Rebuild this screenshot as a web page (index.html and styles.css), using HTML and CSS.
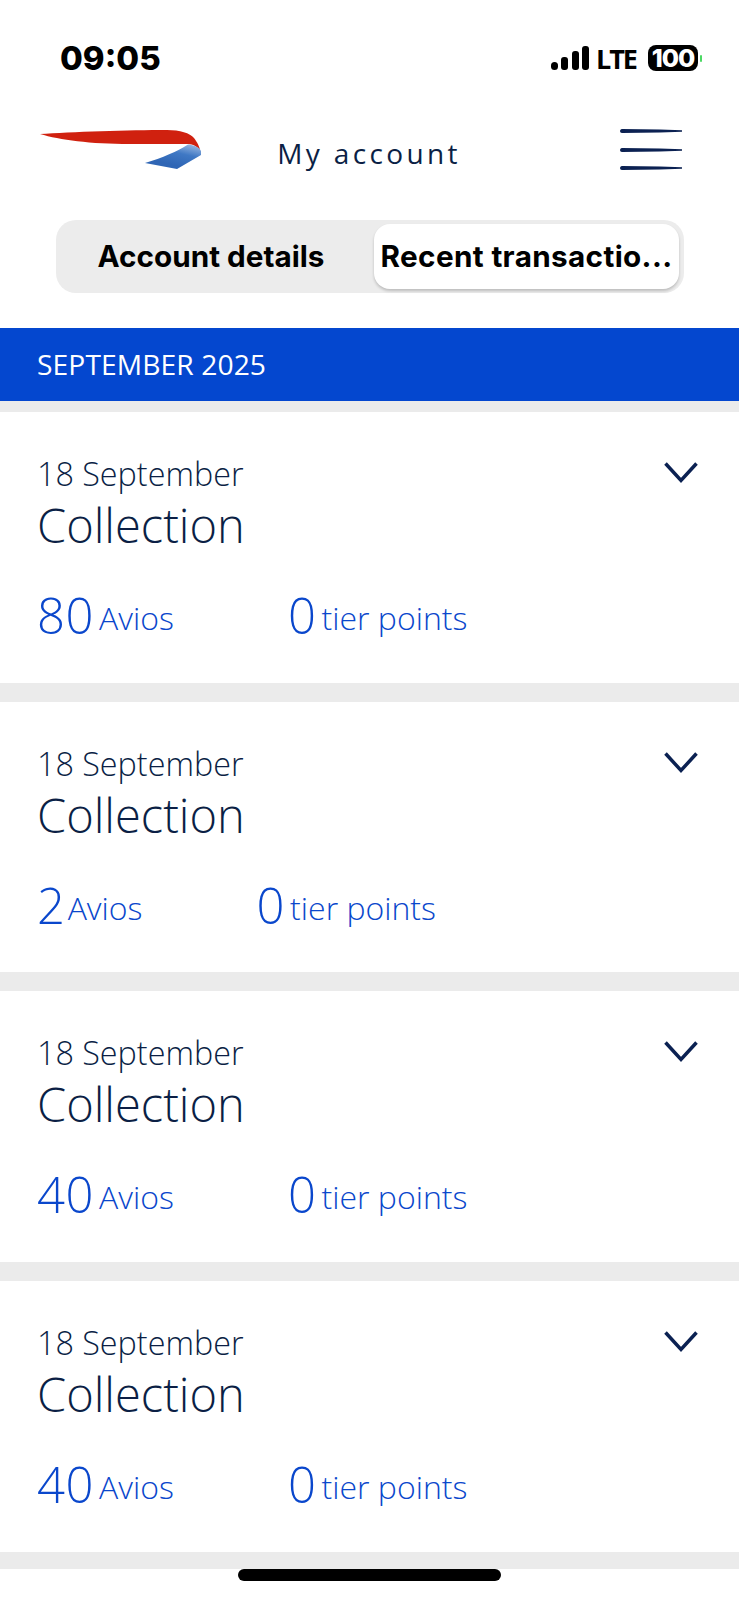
FILE: index.html
```html
<!DOCTYPE html>
<html>
<head>
    <meta charset="UTF-8">
    <title>My account</title>
    <link rel="stylesheet" href="styles.css">
</head>
<body>
    <!-- Status bar -->
    <div class="status-bar">
        <span class="status-time">09:05</span>
        <div class="status-icons">
            <svg class="signal" width="38" height="24" viewBox="0 0 38 24">
                <rect x="0" y="16" width="7" height="8" rx="3.5" fill="#000"/>
                <rect x="10" y="11" width="7" height="13" rx="3" fill="#000"/>
                <rect x="21" y="5" width="7" height="19" rx="3" fill="#000"/>
                <rect x="31" y="0" width="7" height="24" rx="3" fill="#000"/>
            </svg>
            <span class="status-lte">LTE</span>
            <span class="battery">100</span>
            <span class="battery-tip"></span>
        </div>
    </div>

    <header class="app-header">
        <svg class="logo" width="161" height="40" viewBox="0 0 161 40">
            <defs>
                <linearGradient id="wing" x1="0.85" y1="0.05" x2="0.45" y2="0.8">
                    <stop offset="0" stop-color="#8fb0de"/>
                    <stop offset="0.45" stop-color="#3f78c4"/>
                    <stop offset="1" stop-color="#2f66b5"/>
                </linearGradient>
            </defs>
            <path d="M0 4 C30 2 90 0 127 0 C140 0 150 3 154 8 C157 12 160 17 160 21 C157 16 153 14.5 148 14 L90 14 C50 14 20 10 0 4 Z" fill="#d0210f"/>
            <path d="M105 33 C122 28 138 21 148 14.5 C154 15 159 17 161 21 L161 25 L137 39 Z" fill="url(#wing)"/>
        </svg>
        <h1 class="page-title">My account</h1>
        <svg class="menu-icon" width="62" height="42" viewBox="0 0 62 42">
            <path d="M2 0 L40 0.6 L62 1.2 L62 2.8 L40 3.4 L2 4 C-0.6 4 -0.6 0 2 0 Z" fill="#0b2152"/>
            <path d="M2 19 L40 19.6 L62 20.2 L62 21.8 L40 22.4 L2 23 C-0.6 23 -0.6 19 2 19 Z" fill="#0b2152"/>
            <path d="M2 37 L40 37.6 L62 38.2 L62 39.8 L40 40.4 L2 41 C-0.6 41 -0.6 37 2 37 Z" fill="#0b2152"/>
        </svg>
    </header>

    <div class="segments">
        <div class="segment">Account details</div>
        <div class="segment segment-active">Recent transactio...</div>
    </div>

    <div class="month-bar">SEPTEMBER 2025</div>

    <div class="transactions">
        <div class="card">
            <div class="card-top">
                <div>
                    <div class="card-date">18 September</div>
                    <div class="card-title">Collection</div>
                </div>
                <svg class="chevron" width="34" height="22" viewBox="0 0 34 22"><path d="M1.5 1.5 L17 18.5 L32.5 1.5" fill="none" stroke="#0b2152" stroke-width="3.5"/></svg>
            </div>
            <div class="card-values">
                <div class="value"><span class="value-num">80</span> <span class="value-unit">Avios</span></div>
                <div class="value"><span class="value-num">0</span> <span class="value-unit">tier points</span></div>
            </div>
        </div>
        <div class="card">
            <div class="card-top">
                <div>
                    <div class="card-date">18 September</div>
                    <div class="card-title">Collection</div>
                </div>
                <svg class="chevron" width="34" height="22" viewBox="0 0 34 22"><path d="M1.5 1.5 L17 18.5 L32.5 1.5" fill="none" stroke="#0b2152" stroke-width="3.5"/></svg>
            </div>
            <div class="card-values">
                <div class="value"><span class="value-num value-num-tight">2</span> <span class="value-unit">Avios</span></div>
                <div class="value"><span class="value-num">0</span> <span class="value-unit">tier points</span></div>
            </div>
        </div>
        <div class="card">
            <div class="card-top">
                <div>
                    <div class="card-date">18 September</div>
                    <div class="card-title">Collection</div>
                </div>
                <svg class="chevron" width="34" height="22" viewBox="0 0 34 22"><path d="M1.5 1.5 L17 18.5 L32.5 1.5" fill="none" stroke="#0b2152" stroke-width="3.5"/></svg>
            </div>
            <div class="card-values">
                <div class="value"><span class="value-num">40</span> <span class="value-unit">Avios</span></div>
                <div class="value"><span class="value-num">0</span> <span class="value-unit">tier points</span></div>
            </div>
        </div>
        <div class="card">
            <div class="card-top">
                <div>
                    <div class="card-date">18 September</div>
                    <div class="card-title">Collection</div>
                </div>
                <svg class="chevron" width="34" height="22" viewBox="0 0 34 22"><path d="M1.5 1.5 L17 18.5 L32.5 1.5" fill="none" stroke="#0b2152" stroke-width="3.5"/></svg>
            </div>
            <div class="card-values">
                <div class="value"><span class="value-num">40</span> <span class="value-unit">Avios</span></div>
                <div class="value"><span class="value-num">0</span> <span class="value-unit">tier points</span></div>
            </div>
        </div>
    </div>

    <div class="home-bar"></div>
</body>
</html>
```

FILE: styles.css
```css
body {
    font-family: "Open Sans", sans-serif;
    background-color: #fff;
    margin: 0;
    padding: 0;
    height: 1600px;
    overflow: hidden;
}

/* Status bar */
.status-bar {
    display: flex;
    justify-content: space-between;
    align-items: center;
    height: 26px;
    padding: 45px 37px 0 60px;
}

.status-time {
    font-family: Inter, sans-serif;
    font-weight: 800;
    font-size: 33px;
    color: #000;
}

.status-icons {
    display: flex;
    align-items: center;
}

.status-lte {
    font-family: "Open Sans", sans-serif;
    font-weight: 700;
    font-size: 27px;
    letter-spacing: -2px;
    margin-left: 7px;
    color: #000;
}

.battery {
    font-family: Inter, sans-serif;
    font-weight: 800;
    font-size: 25px;
    line-height: 26px;
    color: #fff;
    background-color: #000;
    border-radius: 8px;
    width: 50px;
    text-align: center;
    margin-left: 12px;
    letter-spacing: -1px;
}

.battery-tip {
    width: 2px;
    height: 7px;
    margin-left: 2px;
    background-color: #4cd964;
    border-radius: 1px;
}

/* Header */
.app-header {
    display: flex;
    align-items: flex-start;
    justify-content: space-between;
    height: 149px;
    padding: 59px 57px 0 40px;
    box-sizing: border-box;
}

.page-title {
    margin: 0 83px 0 0;
    padding-top: 4px;
    font-size: 28px;
    line-height: 38px;
    font-weight: 400;
    letter-spacing: 3.35px;
    color: #0b1f45;
}

.menu-icon {
    margin-top: -1px;
}

/* Tabs */
.segments {
    display: flex;
    height: 73px;
    box-sizing: border-box;
    margin: 0 55px 0 56px;
    padding: 4px 5px;
    background-color: #ececec;
    border-radius: 20px;
    font-family: Inter, sans-serif;
    font-weight: 700;
    font-size: 29.7px;
    color: #000;
}

.segment {
    display: flex;
    align-items: center;
    justify-content: center;
    width: 300px;
    padding-bottom: 2px;
    box-sizing: border-box;
    white-space: nowrap;
}

.segment-active {
    width: 305px;
    margin-left: 13px;
    background-color: #fff;
    border-radius: 16px;
    box-shadow: 0 2px 3px rgba(0, 0, 0, 0.2);
    letter-spacing: 0.35px;
}

/* Month header */
.month-bar {
    margin-top: 35px;
    height: 73px;
    line-height: 73px;
    padding-left: 37px;
    background-color: #0447cf;
    color: #fff;
    font-size: 28.2px;
    letter-spacing: 0.1px;
}

/* Transaction cards */
.transactions {
    background-color: #ebebeb;
    padding-top: 11px;
}

.card {
    height: 270.6px;
    box-sizing: border-box;
    padding: 39px 41px 0 37px;
    margin-bottom: 19px;
    background-color: #fff;
}

.card:last-child {
    margin-bottom: 0;
    border-bottom: 17.4px solid #ebebeb;
    height: 288px;
}

.card-top {
    display: flex;
    justify-content: space-between;
    align-items: flex-start;
}

.chevron {
    margin-top: 11px;
}

.card-date {
    font-size: 32.3px;
    line-height: 44px;
    font-weight: 300;
    color: #0b1f45;
}

.card-title {
    font-size: 47px;
    line-height: 60px;
    font-weight: 300;
    color: #0b1f45;
}

.card-values {
    display: flex;
    gap: 114px;
    margin-top: 28px;
    color: #0a47cc;
    font-weight: 300;
}

.value-num {
    font-size: 49px;
    line-height: 64px;
    letter-spacing: 0.5px;
    vertical-align: -4px;
}

.value-num-tight {
    margin-right: -3px;
}

.value-unit {
    font-size: 32px;
    margin-left: 1px;
}

.home-bar {
    width: 263px;
    height: 12px;
    margin: 0 auto;
    background-color: #000;
    border-radius: 6px;
}
```
